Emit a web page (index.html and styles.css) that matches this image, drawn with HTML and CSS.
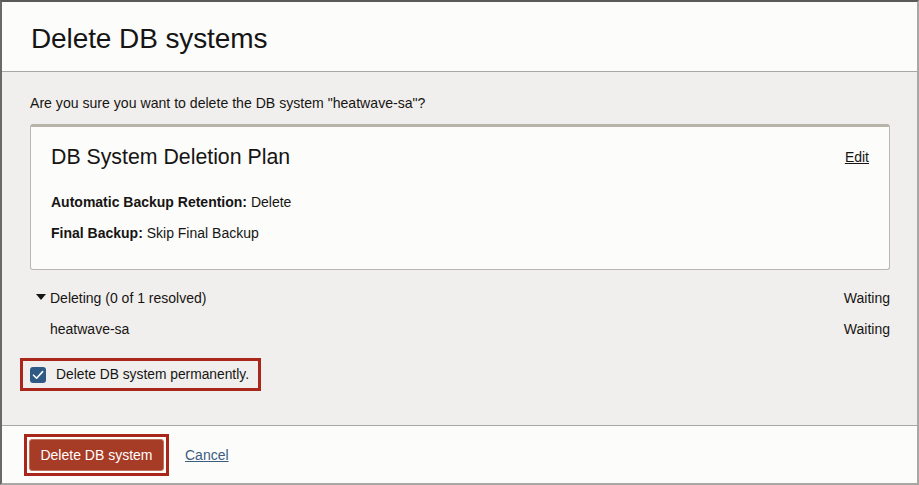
FILE: index.html
```html
<!DOCTYPE html>
<html>
<head>
<meta charset="utf-8">
<link rel="stylesheet" href="styles.css">
</head>
<body>
<div class="dialog">
  <header class="dlg-header">
    <h1 class="dlg-title">Delete DB systems</h1>
  </header>
  <main class="dlg-body">
    <p class="question">Are you sure you want to delete the DB system "heatwave-sa"?</p>
    <section class="card">
      <div class="card-head">
        <h2 class="card-title">DB System Deletion Plan</h2>
        <a class="edit-link" href="#">Edit</a>
      </div>
      <div class="card-row"><b>Automatic Backup Retention:</b> Delete</div>
      <div class="card-row"><b>Final Backup:</b> Skip Final Backup</div>
    </section>
    <div class="status-row group-row">
      <span class="group-label"><svg class="caret" width="10" height="6" viewBox="0 0 10 6"><path d="M0 0H10L5 6Z" fill="#161513"/></svg>Deleting (0 of 1 resolved)</span>
      <span>Waiting</span>
    </div>
    <div class="status-row item-row">
      <span>heatwave-sa</span>
      <span>Waiting</span>
    </div>
    <div class="highlight check-hl">
      <span class="checkbox"><svg width="12" height="10" viewBox="0 0 12 10"><path d="M1.5 5.2L4.6 8.2L10.6 1.6" fill="none" stroke="#fff" stroke-width="1.6" stroke-linecap="round" stroke-linejoin="round"/></svg></span>
      <span class="check-label">Delete DB system permanently.</span>
    </div>
  </main>
  <footer class="dlg-footer">
    <div class="highlight btn-hl">
      <button class="btn-danger">Delete DB system</button>
    </div>
    <a class="cancel" href="#">Cancel</a>
  </footer>
</div>
</body>
</html>
```
FILE: styles.css
```css
html, body {
  margin: 0;
  padding: 0;
}
body {
  width: 919px;
  height: 485px;
  overflow: hidden;
  font-family: "Liberation Sans", Arial, Helvetica, sans-serif;
  color: #161513;
  background: #fcfcfb;
}
.dialog {
  box-sizing: border-box;
  width: 919px;
  height: 485px;
  border-top: 2px solid #5a5956;
  border-left: 2px solid #6a6966;
  border-right: 2px solid #a9a7a4;
  border-bottom: 2px solid #a9a7a4;
  display: flex;
  flex-direction: column;
  background: #fcfcfb;
}
.dlg-header {
  height: 69px;
  border-bottom: 1px solid #a9a7a3;
  background: #fcfcfb;
  display: flex;
  align-items: flex-start;
}
.dlg-title {
  margin: 20px 0 0 29px;
  font-size: 28px;
  font-weight: 400;
  line-height: 34px;
  letter-spacing: -0.1px;
}
.dlg-body {
  background: #f1efed;
  height: 353px;
  box-sizing: border-box;
  padding: 21px 27px 0 28px;
  display: flex;
  flex-direction: column;
}
.question {
  margin: 0;
  font-size: 14.1px;
  line-height: 20px;
}
.card {
  margin-top: 11px;
  background: #fcfcfb;
  border: 1px solid #b9b6b0;
  border-top: 3px solid #b7b2aa;
  border-radius: 3px;
  height: 146px;
  box-sizing: border-box;
  padding: 18px 20px 0 20px;
}
.card-head {
  display: flex;
  justify-content: space-between;
  align-items: center;
  height: 24px;
  margin-bottom: 23px;
}
.card-title {
  margin: 0;
  font-size: 21.3px;
  font-weight: 400;
  line-height: 24px;
}
.edit-link {
  color: #161513;
  font-size: 14px;
  text-decoration: underline;
}
.card-row {
  font-size: 14px;
  line-height: 20px;
  height: 31px;
}
.card-row b {
  font-weight: 700;
}
.status-row {
  display: flex;
  justify-content: space-between;
  font-size: 14px;
  line-height: 20px;
}
.group-row {
  margin-top: 18px;
}
.group-label {
  display: flex;
  align-items: center;
}
.caret {
  margin: 0 4px 2px 6px;
}
.item-row {
  margin-top: 11px;
  padding-left: 20px;
}
.highlight {
  border: 3px solid #a9271a;
}
.check-hl {
  align-self: flex-start;
  margin: 19px 0 0 -10px;
  width: 228px;
  height: 27px;
  display: flex;
  align-items: center;
  padding-left: 7px;
  box-sizing: content-box;
}
.checkbox {
  width: 16px;
  height: 16px;
  border-radius: 3px;
  background: #2f5a84;
  display: inline-flex;
  align-items: center;
  justify-content: center;
}
.check-label {
  font-size: 13.8px;
  margin-left: 10px;
}
.dlg-footer {
  flex: 1;
  border-top: 1px solid #a9a7a3;
  background: #fcfcfb;
  display: flex;
  align-items: center;
  padding-left: 22px;
}
.btn-hl {
  padding: 2px;
  background: #fcfcfb;
}
.btn-danger {
  display: block;
  width: 135px;
  height: 32px;
  background: #a63c26;
  color: #fff;
  border: 1px solid #c56f5d;
  border-radius: 3px;
  font-family: "Liberation Sans", Arial, Helvetica, sans-serif;
  font-size: 14px;
  padding: 0;
}
.cancel {
  margin-left: 16px;
  color: #3b5d80;
  font-size: 14px;
  text-decoration: underline;
}
```
